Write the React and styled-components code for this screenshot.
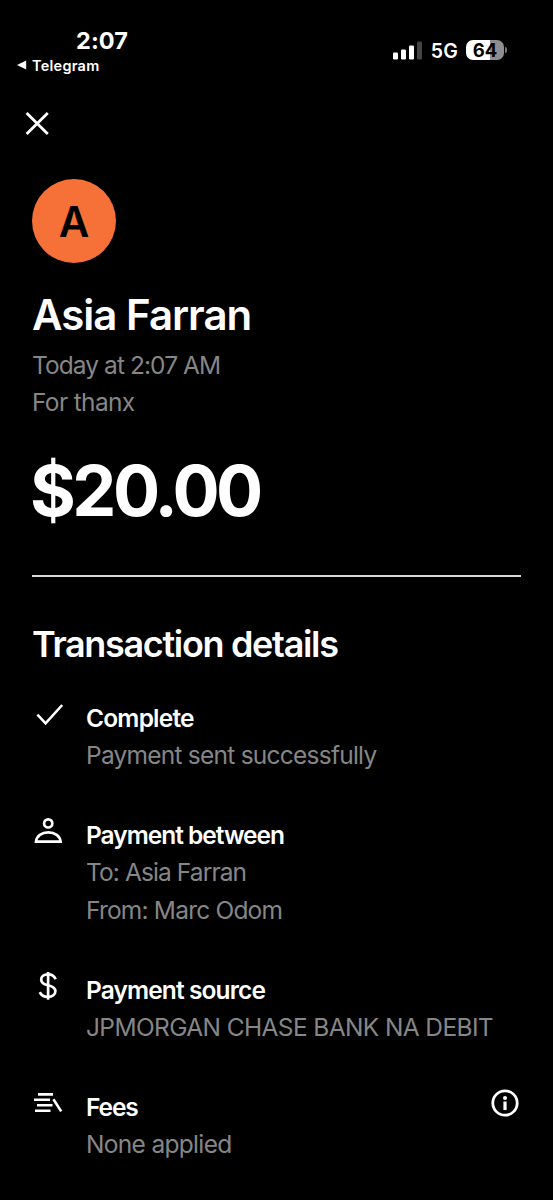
import React from "react";
import styled, { createGlobalStyle } from "styled-components";

const COLORS = {
  black: "#000000",
  white: "#ffffff",
  grey: "#868686",
  orange: "#f67138",
};

const GlobalStyle = createGlobalStyle`
  body {
    margin: 0;
    background: ${COLORS.black};
    font-family: Inter, "Liberation Sans", sans-serif;
    -webkit-font-smoothing: antialiased;
  }
`;
const Screen = styled.div`
  width: 553px;
  height: 1200px;
  box-sizing: border-box;
  overflow: hidden;
  background: ${COLORS.black};
  color: ${COLORS.white};
`;
const StatusBar = styled.header`
  display: flex;
  justify-content: space-between;
  height: 80px;
  padding: 0 46px 0 17px;
  box-sizing: border-box;
`;
const StatusLeft = styled.div`
  display: flex;
  flex-direction: column;
  padding-top: 27px;
`;
const Clock = styled.div`
  padding-left: 59px;
  font-size: 23.5px;
  line-height: 28px;
  font-weight: 700;
  letter-spacing: ${(props) => props.spacing};
`;
const BackLink = styled.div`
  display: flex;
  align-items: center;
  gap: 5px;
  height: 20px;
  font-size: 14.5px;
  font-weight: 600;
  letter-spacing: ${(props) => props.spacing};
`;
const StatusRight = styled.div`
  display: flex;
  align-items: center;
  height: 22px;
  margin-top: 39px;
`;
const Network = styled.span`
  margin: 2px 8px 0 9px;
  font-size: 19.5px;
  font-weight: 600;
  letter-spacing: ${(props) => props.spacing};
`;
const Battery = styled.div`
  display: flex;
  align-items: center;
  justify-content: center;
  width: 38px;
  height: 20px;
  border-radius: 7px;
  background: linear-gradient(90deg, ${COLORS.white} 64%, #8e8e8e 64%);
  color: ${COLORS.black};
  font-size: 18.5px;
  line-height: 20px;
  font-weight: 700;
`;
const BatteryCap = styled.div`
  width: 2px;
  height: 6px;
  margin-left: 1px;
  border-radius: 0 2px 2px 0;
  background: #777777;
`;
const Toolbar = styled.nav`
  display: flex;
  height: 99px;
  padding: 31px 0 0 25px;
  box-sizing: border-box;
`;
const CloseButton = styled.button`
  display: flex;
  width: 25px;
  height: 25px;
  padding: 0;
  border: none;
  background: none;
  color: ${COLORS.white};
  cursor: pointer;
`;
const Content = styled.main`
  padding: 0 32px;
`;
const Avatar = styled.div`
  display: flex;
  align-items: center;
  justify-content: center;
  width: 84px;
  height: 84px;
  border-radius: 50%;
  background: ${COLORS.orange};
  color: ${COLORS.black};
  font-size: 42px;
  font-weight: 600;
`;
const Name = styled.h1`
  margin: 27px 0 7px;
  font-size: 42px;
  line-height: 50px;
  font-weight: 600;
  letter-spacing: ${(props) => props.spacing};
  white-space: nowrap;
`;
const Line = styled.p`
  margin: 0;
  font-size: 24.5px;
  line-height: 37.2px;
  font-weight: ${(props) => (props.$strong ? 600 : 400)};
  color: ${(props) => (props.$strong ? COLORS.white : COLORS.grey)};
  letter-spacing: ${(props) => props.spacing};
  white-space: nowrap;
`;
const Amount = styled.div`
  margin: 27.4px 0 0 -2px;
  font-size: 70px;
  line-height: 84px;
  font-weight: 700;
  letter-spacing: ${(props) => props.spacing};
`;
const Divider = styled.hr`
  height: 2px;
  margin: 42px 0 45px;
  border: none;
  background: #d8d8d8;
`;
const SectionTitle = styled.h2`
  margin: 0 0 34px;
  font-size: 36px;
  line-height: 44px;
  font-weight: 600;
  letter-spacing: ${(props) => props.spacing};
  white-space: nowrap;
`;
const Details = styled.div`
  display: flex;
  flex-direction: column;
  gap: 42.9px;
`;
const Detail = styled.section`
  display: grid;
  grid-template-columns: 32px 1fr auto;
  column-gap: 22px;
  align-items: start;
`;
const InfoButton = styled.button`
  display: flex;
  padding: 0;
  margin-right: 2px;
  border: none;
  background: none;
  color: ${COLORS.white};
  cursor: pointer;
`;

const Icon = ({ size = 32, width = 2.6, children }) => (
  <svg
    width={size}
    height={size}
    viewBox={`0 0 ${size} ${size}`}
    fill="none"
    stroke="currentColor"
    strokeWidth={width}
  >
    {children}
  </svg>
);

const CheckIcon = () => (
  <Icon>
    <path d="M5.4 14.6L13.6 23.4L30.2 5" />
  </Icon>
);
const PersonIcon = () => (
  <Icon width={2.7}>
    <circle cx="16.2" cy="6.4" r="4.1" />
    <path d="M4 24.6C4.6 19 9.6 15.3 16.3 15.3S28 19 28.6 24.6Z" />
  </Icon>
);
const DollarIcon = () => (
  <Icon width={2.7}>
    <path d="M16.1 0V27.7" />
    <path d="M23.6 7.2C22.4 3.9 19.7 2.4 16 2.4C11.7 2.4 9.2 4.4 9.2 7.7C9.2 11.3 12.2 12.3 16 13.2C20.3 14.2 23.4 15.3 23.4 19.1C23.4 22.5 20.5 24.9 16 24.9C11.8 24.9 9.2 23.3 7.8 20.1" />
  </Icon>
);
const FeesIcon = () => (
  <Icon>
    <path d="M6 5.4H21M2 10.8H18M5 16.2H20.5M3 21.7H18.5" />
    <path d="M21.4 10.2L29.2 22.4" />
  </Icon>
);
const InfoIcon = () => (
  <Icon size={28} width={2.8}>
    <circle cx="14" cy="14" r="12.2" />
    <circle cx="14" cy="9" r="2" fill="currentColor" stroke="none" />
    <path d="M14 12.5V21" strokeWidth="3.2" />
  </Icon>
);
const CloseIcon = () => (
  <Icon size={25} width={2.8}>
    <path d="M1.6 1.9L22.8 23.1M22.8 1.9L1.6 23.1" />
  </Icon>
);
const SignalIcon = () => (
  <svg width="29" height="19" viewBox="0 0 29 19" fill={COLORS.white}>
    <rect x="0" y="11.5" width="5" height="7" rx="1.3" />
    <rect x="8" y="8.5" width="5" height="10" rx="1.3" />
    <rect x="16" y="4.5" width="5" height="14" rx="1.3" />
    <rect x="24" y="0.5" width="5" height="18" rx="1.3" fill="#444444" />
  </svg>
);
const BackArrow = () => (
  <svg width="10" height="10" viewBox="0 0 10 10" fill={COLORS.white}>
    <path d="M0 5L9.2 0.5V9.5Z" />
  </svg>
);

const details = [
  {
    icon: CheckIcon,
    title: "Complete",
    spacing: "-0.8px",
    lines: [["Payment sent successfully", "-0.76px"]],
  },
  {
    icon: PersonIcon,
    title: "Payment between",
    spacing: "-1px",
    lines: [
      ["To: Asia Farran", "-0.9px"],
      ["From: Marc Odom", "-0.8px"],
    ],
  },
  {
    icon: DollarIcon,
    title: "Payment source",
    spacing: "-0.88px",
    lines: [["JPMORGAN CHASE BANK NA DEBIT", "-0.62px"]],
  },
  {
    icon: FeesIcon,
    title: "Fees",
    spacing: "-1.1px",
    lines: [["None applied", "-0.68px"]],
    info: true,
  },
];

const App = () => {
  return (
    <Screen>
      <GlobalStyle />
      <StatusBar>
        <StatusLeft>
          <Clock spacing="0.1px">2:07</Clock>
          <BackLink spacing="0.25px">
            <BackArrow />
            Telegram
          </BackLink>
        </StatusLeft>
        <StatusRight>
          <SignalIcon />
          <Network spacing="0.2px">5G</Network>
          <Battery>64</Battery>
          <BatteryCap />
        </StatusRight>
      </StatusBar>
      <Toolbar>
        <CloseButton aria-label="Close">
          <CloseIcon />
        </CloseButton>
      </Toolbar>
      <Content>
        <Avatar>A</Avatar>
        <Name spacing="-1px">Asia Farran</Name>
        <Line spacing="-0.93px">Today at 2:07 AM</Line>
        <Line spacing="-0.65px">For thanx</Line>
        <Amount spacing="-3.5px">$20.00</Amount>
        <Divider />
        <SectionTitle spacing="-1.33px">Transaction details</SectionTitle>
        <Details>
          {details.map(({ icon: DetailIcon, title, spacing, lines, info }) => (
            <Detail key={title}>
              <DetailIcon />
              <div>
                <Line as="h3" $strong spacing={spacing}>
                  {title}
                </Line>
                {lines.map(([text, lineSpacing]) => (
                  <Line key={text} spacing={lineSpacing}>
                    {text}
                  </Line>
                ))}
              </div>
              {info ? (
                <InfoButton aria-label="Fee information">
                  <InfoIcon />
                </InfoButton>
              ) : null}
            </Detail>
          ))}
        </Details>
      </Content>
    </Screen>
  );
};
export default App;
